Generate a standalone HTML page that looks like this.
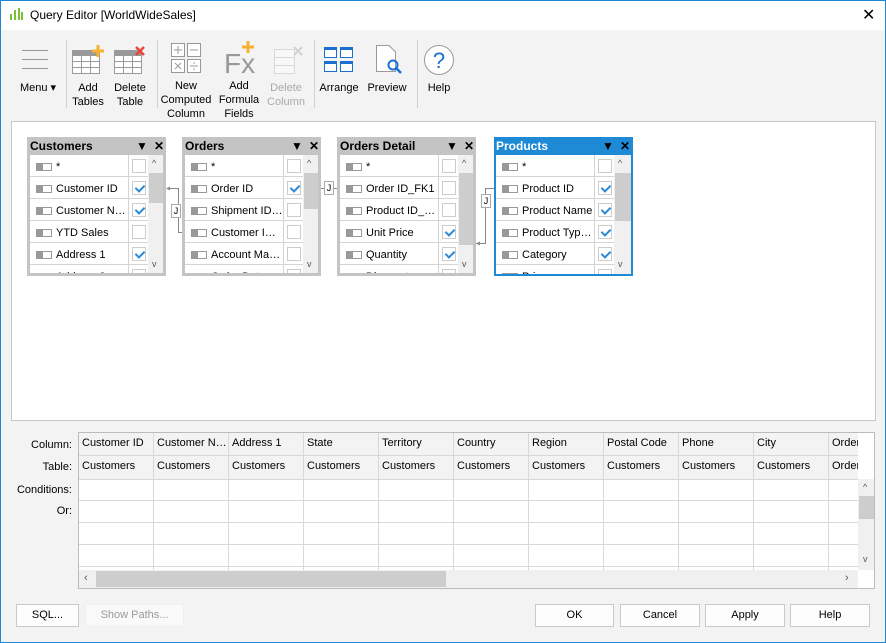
<!DOCTYPE html>
<html><head><meta charset="utf-8"><style>
*{box-sizing:border-box;margin:0;padding:0}
body{width:886px;height:643px;position:relative;overflow:hidden;background:#f3f3f3;font-family:"Liberation Sans",sans-serif;font-size:11px;color:#000}
.win{position:absolute;left:0;top:0;width:886px;height:643px;border:1px solid #1e88d6}
.title{position:absolute;left:1px;top:1px;width:884px;height:29px;background:#fff}
.a{position:absolute}
.tl{position:absolute;text-align:center;font-size:11px;line-height:14px}
.sep{position:absolute;top:40px;width:1px;height:68px;background:#d0d0d0}
.tb{position:absolute;top:137px;width:139px;height:139px;background:#c4c4c4;border:3px solid #c4c4c4;border-top:0;overflow:hidden}
.tb.sel{background:#1e8ad6;border-color:#1e8ad6;border-width:2px;border-top:0}
.tb .h{height:18px;font-weight:bold;font-size:12px;line-height:19px;position:relative}
.tb.sel .h{color:#fff}
.tb .h i{position:absolute;top:0;font-style:normal;font-size:12px}
.body{position:relative;background:#fff;height:125px;overflow:hidden}
.r{height:22px;border-bottom:1px solid #d4d4d4;position:relative;width:118px;line-height:24px;font-size:11px;white-space:nowrap}
.r .ic{position:absolute;left:6px;top:8px;width:16px;height:8px;border:1px solid #999;border-left:7px solid #999;background:#fff}
.r .t{position:absolute;left:26px;top:0}
.r .cb{position:absolute;left:98px;top:0;width:20px;height:22px;border-left:1px solid #d4d4d4}
.r .cb b{position:absolute;left:3px;top:4px;width:14px;height:14px;border:1px solid #ccc;background:#fff}
.r .cb b.k::after{content:"";position:absolute;left:4px;top:1px;width:4px;height:7px;border:solid #2a8ad8;border-width:0 2px 2px 0;transform:rotate(45deg)}
.sb{position:absolute;left:118px;top:0;width:18px;height:125px;background:#f0f0f0}
.sb .th{position:absolute;left:1px;width:16px;background:#cdcdcd}
.sb .u,.sb .d{position:absolute;left:4px;font-size:9px;color:#555}
.grid{position:absolute;left:78px;top:432px;width:797px;height:157px;border:1px solid #bcbcbc;background:#fff;overflow:hidden}
.c{position:absolute;border-right:1px solid #d8d8d8;border-bottom:1px solid #d8d8d8;width:75px;padding-left:3px;line-height:20px;white-space:nowrap;overflow:hidden}
.btn{position:absolute;top:604px;height:23px;border:1px solid #c9c9c9;background:#fdfdfd;text-align:center;line-height:21px;font-size:11px}
.lab{position:absolute;right:814px;font-size:11px;text-align:right}
.jn{position:absolute;width:10px;height:14px;border:1px solid #aaa;background:#fff;font-size:9px;line-height:12px;text-align:center}
</style></head><body>
<div class="win"></div>
<div class="title"></div>
<svg class="a" style="left:10px;top:8px" width="14" height="14"><g fill="#7bbf3a"><rect x="0" y="6" width="2" height="6"/><rect x="4" y="2" width="2" height="10"/><rect x="8" y="0" width="2" height="12"/><rect x="11" y="4" width="2" height="8"/></g></svg>
<div class="a" style="left:30px;top:8px;font-size:12px">Query Editor [WorldWideSales]</div>
<div class="a" style="left:862px;top:5px;font-size:16px">✕</div>

<svg class="a" style="left:22px;top:49px" width="28" height="22"><g stroke="#999" stroke-width="1"><line x1="0" y1="1.5" x2="26" y2="1.5"/><line x1="0" y1="10.5" x2="26" y2="10.5"/><line x1="0" y1="19.5" x2="26" y2="19.5"/></g></svg>
<div class="tl" style="left:16px;top:81px;width:44px">Menu ▾</div>
<div class="sep" style="left:66px"></div>
<svg class="a" style="left:72px;top:45px" width="32" height="30"><rect x="0" y="5" width="28" height="5" fill="#999"/><rect x="0.5" y="10.5" width="27" height="18" fill="#fff" stroke="#999"/><path d="M0 16.5H28M0 22.5H28M9.5 10V29M18.5 10V29" stroke="#999"/><path d="M26 0V12M20 6H32" stroke="#f8b133" stroke-width="3"/></svg>
<div class="tl" style="left:66px;top:81px;width:44px">Add<br>Tables</div>
<svg class="a" style="left:114px;top:45px" width="32" height="30"><rect x="0" y="5" width="28" height="5" fill="#999"/><rect x="0.5" y="10.5" width="27" height="18" fill="#fff" stroke="#999"/><path d="M0 16.5H28M0 22.5H28M9.5 10V29M18.5 10V29" stroke="#999"/><path d="M22 2L30 10M30 2L22 10" stroke="#e8463a" stroke-width="2.5"/></svg>
<div class="tl" style="left:108px;top:81px;width:44px">Delete<br>Table</div>
<div class="sep" style="left:157px"></div>
<svg class="a" style="left:171px;top:43px" width="32" height="30"><g fill="#fff" stroke="#999"><rect x="0.5" y="0.5" width="13" height="13"/><rect x="16.5" y="0.5" width="13" height="13"/><rect x="0.5" y="16.5" width="13" height="13"/><rect x="16.5" y="16.5" width="13" height="13"/></g><path d="M7 3V11M3 7H11M19 7H27M4 20L10 26M10 20L4 26M19 23H27" stroke="#999"/><circle cx="23" cy="20" r="0.8" fill="#999"/><circle cx="23" cy="26" r="0.8" fill="#999"/></svg>
<div class="tl" style="left:158px;top:79px;width:56px">New<br>Computed<br>Column</div>
<svg class="a" style="left:224px;top:40px" width="32" height="36"><text x="0" y="33" font-family="Liberation Sans" font-size="28" fill="#999">Fx</text><path d="M24 1V13M18 7H30" stroke="#f8b133" stroke-width="3"/></svg>
<div class="tl" style="left:216px;top:79px;width:46px">Add<br>Formula<br>Fields</div>
<svg class="a" style="left:274px;top:45px" width="30" height="30" opacity="0.45"><rect x="0.5" y="4.5" width="20" height="24" fill="#fff" stroke="#bbb"/><path d="M0 12.5H20M0 20.5H20" stroke="#bbb"/><path d="M20 2L28 10M28 2L20 10" stroke="#aaa" stroke-width="2"/></svg>
<div class="tl" style="left:264px;top:81px;width:44px;color:#aaa">Delete<br>Column</div>
<div class="sep" style="left:314px"></div>
<svg class="a" style="left:324px;top:47px" width="30" height="26"><g fill="#fff" stroke="#1a6fd0"><rect x="0.5" y="0.5" width="12" height="10"/><rect x="16.5" y="0.5" width="12" height="10"/><rect x="0.5" y="14.5" width="12" height="10"/><rect x="16.5" y="14.5" width="12" height="10"/></g><g fill="#1a6fd0"><rect x="0" y="0" width="13" height="3"/><rect x="16" y="0" width="13" height="3"/><rect x="0" y="14" width="13" height="3"/><rect x="16" y="14" width="13" height="3"/></g></svg>
<div class="tl" style="left:316px;top:81px;width:46px">Arrange</div>
<svg class="a" style="left:376px;top:45px" width="28" height="30"><path d="M0.5 0.5H13L19.5 7V26.5H0.5Z" fill="#fff" stroke="#999"/><circle cx="17" cy="20" r="4.5" fill="none" stroke="#1a6fd0" stroke-width="2"/><path d="M20 23L25 28" stroke="#1a6fd0" stroke-width="2.5"/></svg>
<div class="tl" style="left:364px;top:81px;width:46px">Preview</div>
<div class="sep" style="left:417px"></div>
<svg class="a" style="left:423px;top:44px" width="32" height="32"><circle cx="16" cy="16" r="14.5" fill="#fff" stroke="#999"/><text x="16" y="24" text-anchor="middle" font-family="Liberation Sans" font-size="22" fill="#1a6fd0">?</text></svg>
<div class="tl" style="left:417px;top:81px;width:44px">Help</div>

<div class="a" style="left:11px;top:121px;width:865px;height:300px;background:#fff;border:1px solid #c8c8c8"></div>

<div class="tb" style="left:27px"><div class="h">Customers<i style="left:106px">▼</i><i style="left:124px">✕</i></div>
<div class="body"><div class="r"><span class="ic"></span><span class="t">*</span><span class="cb"><b></b></span></div><div class="r"><span class="ic"></span><span class="t">Customer ID</span><span class="cb"><b class="k"></b></span></div><div class="r"><span class="ic"></span><span class="t">Customer N…</span><span class="cb"><b class="k"></b></span></div><div class="r"><span class="ic"></span><span class="t">YTD Sales</span><span class="cb"><b></b></span></div><div class="r"><span class="ic"></span><span class="t">Address 1</span><span class="cb"><b class="k"></b></span></div><div class="r"><span class="ic"></span><span class="t">Address 2</span><span class="cb"><b></b></span></div>
<div class="sb"><span class="u" style="top:3px">^</span><div class="th" style="top:18px;height:30px"></div><span class="d" style="top:104px">v</span></div></div></div>

<div class="tb" style="left:182px"><div class="h">Orders<i style="left:106px">▼</i><i style="left:124px">✕</i></div>
<div class="body"><div class="r"><span class="ic"></span><span class="t">*</span><span class="cb"><b></b></span></div><div class="r"><span class="ic"></span><span class="t">Order ID</span><span class="cb"><b class="k"></b></span></div><div class="r"><span class="ic"></span><span class="t">Shipment ID…</span><span class="cb"><b></b></span></div><div class="r"><span class="ic"></span><span class="t">Customer I…</span><span class="cb"><b></b></span></div><div class="r"><span class="ic"></span><span class="t">Account Ma…</span><span class="cb"><b></b></span></div><div class="r"><span class="ic"></span><span class="t">Order Date</span><span class="cb"><b></b></span></div>
<div class="sb"><span class="u" style="top:3px">^</span><div class="th" style="top:18px;height:36px"></div><span class="d" style="top:104px">v</span></div></div></div>

<div class="tb" style="left:337px"><div class="h">Orders Detail<i style="left:106px">▼</i><i style="left:124px">✕</i></div>
<div class="body"><div class="r"><span class="ic"></span><span class="t">*</span><span class="cb"><b></b></span></div><div class="r"><span class="ic"></span><span class="t">Order ID_FK1</span><span class="cb"><b></b></span></div><div class="r"><span class="ic"></span><span class="t">Product ID_…</span><span class="cb"><b></b></span></div><div class="r"><span class="ic"></span><span class="t">Unit Price</span><span class="cb"><b class="k"></b></span></div><div class="r"><span class="ic"></span><span class="t">Quantity</span><span class="cb"><b class="k"></b></span></div><div class="r"><span class="ic"></span><span class="t">Discount</span><span class="cb"><b></b></span></div>
<div class="sb"><span class="u" style="top:3px">^</span><div class="th" style="top:18px;height:72px"></div><span class="d" style="top:104px">v</span></div></div></div>

<div class="tb sel" style="left:494px"><div class="h">Products<i style="left:106px;color:#000">▼</i><i style="left:124px;color:#000">✕</i></div>
<div class="body"><div class="r"><span class="ic"></span><span class="t">*</span><span class="cb"><b></b></span></div><div class="r"><span class="ic"></span><span class="t">Product ID</span><span class="cb"><b class="k"></b></span></div><div class="r"><span class="ic"></span><span class="t">Product Name</span><span class="cb"><b class="k"></b></span></div><div class="r"><span class="ic"></span><span class="t">Product Typ…</span><span class="cb"><b class="k"></b></span></div><div class="r"><span class="ic"></span><span class="t">Category</span><span class="cb"><b class="k"></b></span></div><div class="r"><span class="ic"></span><span class="t">Price</span><span class="cb"><b></b></span></div>
<div class="sb"><span class="u" style="top:3px">^</span><div class="th" style="top:18px;height:48px"></div><span class="d" style="top:104px">v</span></div></div></div>

<svg class="a" style="left:0;top:0" width="886" height="300"><g stroke="#888" fill="none"><path d="M168 188.5H178.5V232.5H182"/><path d="M321 188.5H337"/><path d="M476 243.5H485.5V188.5H494"/></g><path d="M166 188.5L170 186.5V190.5Z" fill="#888"/><path d="M476 243.5L480 241.5V245.5Z" fill="#888"/></svg>
<div class="jn" style="left:171px;top:204px">J</div>
<div class="jn" style="left:324px;top:181px">J</div>
<div class="jn" style="left:481px;top:194px">J</div>

<div class="lab" style="top:439px">Column:</div>
<div class="lab" style="top:461px">Table:</div>
<div class="lab" style="top:484px">Conditions:</div>
<div class="lab" style="top:505px">Or:</div>
<div class="grid">
<div class="a" style="left:0;top:0;width:797px;height:46px;background:#f3f3f3"></div>
<div class="c" style="left:0;top:0;height:23px">Customer ID</div><div class="c" style="left:75px;top:0;height:23px">Customer N…</div><div class="c" style="left:150px;top:0;height:23px">Address 1</div><div class="c" style="left:225px;top:0;height:23px">State</div><div class="c" style="left:300px;top:0;height:23px">Territory</div><div class="c" style="left:375px;top:0;height:23px">Country</div><div class="c" style="left:450px;top:0;height:23px">Region</div><div class="c" style="left:525px;top:0;height:23px">Postal Code</div><div class="c" style="left:600px;top:0;height:23px">Phone</div><div class="c" style="left:675px;top:0;height:23px">City</div><div class="c" style="left:750px;top:0;height:23px">Order Date</div>
<div class="c" style="left:0;top:23px;height:24px">Customers</div><div class="c" style="left:75px;top:23px;height:24px">Customers</div><div class="c" style="left:150px;top:23px;height:24px">Customers</div><div class="c" style="left:225px;top:23px;height:24px">Customers</div><div class="c" style="left:300px;top:23px;height:24px">Customers</div><div class="c" style="left:375px;top:23px;height:24px">Customers</div><div class="c" style="left:450px;top:23px;height:24px">Customers</div><div class="c" style="left:525px;top:23px;height:24px">Customers</div><div class="c" style="left:600px;top:23px;height:24px">Customers</div><div class="c" style="left:675px;top:23px;height:24px">Customers</div><div class="c" style="left:750px;top:23px;height:24px">Orders</div>
<svg class="a" style="left:0;top:46px" width="797" height="92"><g stroke="#d8d8d8"><path d="M0 21.5H797M0 43.5H797M0 65.5H797M0 87.5H797"/><path d="M74.5 0V92M149.5 0V92M224.5 0V92M299.5 0V92M374.5 0V92M449.5 0V92M524.5 0V92M599.5 0V92M674.5 0V92M749.5 0V92"/></g></svg>
<div class="a" style="left:779px;top:0;width:18px;height:46px;background:#fff"></div>
<div class="a" style="left:779px;top:46px;width:18px;height:92px;background:#f0f0f0"><div class="a" style="left:1px;top:17px;width:16px;height:23px;background:#cdcdcd"></div><span class="a" style="left:5px;top:3px;font-size:9px;color:#555">^</span><span class="a" style="left:5px;top:75px;font-size:9px;color:#555">v</span></div>
<div class="a" style="left:0;top:137px;width:779px;height:18px;background:#f0f0f0"><div class="a" style="left:17px;top:1px;width:350px;height:16px;background:#cdcdcd"></div><span class="a" style="left:5px;top:2px;font-size:11px;color:#555">‹</span><span class="a" style="left:766px;top:2px;font-size:11px;color:#555">›</span></div>
<div class="a" style="left:779px;top:137px;width:18px;height:18px;background:#fff"></div>
</div>

<div class="btn" style="left:16px;width:63px">SQL...</div>
<div class="btn" style="left:85px;width:99px;color:#999;border-color:#f0f0f0;background:#f9f9f9">Show Paths...</div>
<div class="btn" style="left:535px;width:79px">OK</div>
<div class="btn" style="left:620px;width:80px">Cancel</div>
<div class="btn" style="left:705px;width:80px">Apply</div>
<div class="btn" style="left:790px;width:80px">Help</div>
</body></html>
